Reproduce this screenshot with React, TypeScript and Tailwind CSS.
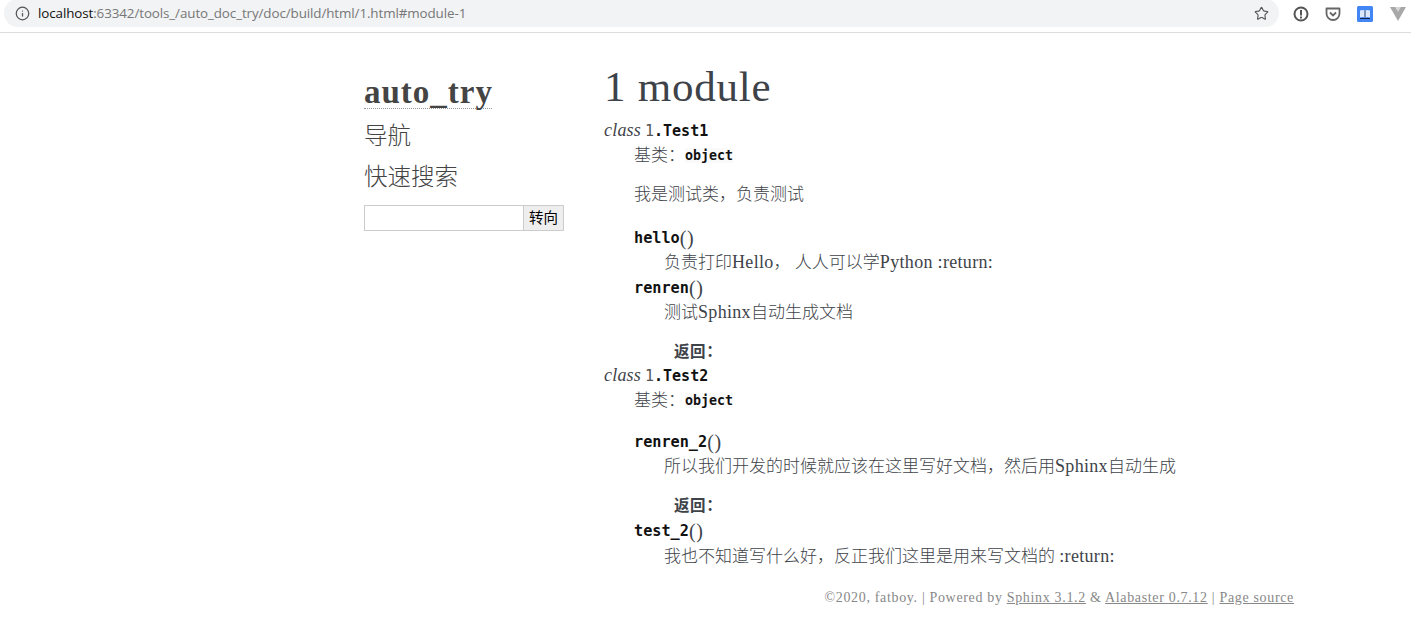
import React from "react";
import { Info, Star } from "lucide-react";

const serif = "font-['Liberation_Serif','Noto_Sans_CJK_SC',serif]";
const mono = "font-['DejaVu_Sans_Mono',monospace] font-bold text-[#111]";

function Name({ children }: { children: React.ReactNode }) {
  return <span className={`${mono} text-[15.2px]`}>{children}</span>;
}

function Obj() {
  return <span className={`${mono} text-[13.3px] bg-[#fafafa] relative -top-px`}>object</span>;
}

function L({ children }: { children: React.ReactNode }) {
  return <span className="text-[18px] tracking-[0.32px] font-normal">{children}</span>;
}

function Row({ indent = "", className = "", children }: { indent?: string; className?: string; children: React.ReactNode }) {
  return <div className={`h-[25px] leading-[25px] whitespace-nowrap ${indent} ${className}`}>{children}</div>;
}

function ClassSig({ name }: { name: string }) {
  return (
    <Row>
      <em className="text-[18px] tracking-[0.2px]">class</em>
      <span className="font-['DejaVu_Sans_Mono',monospace] text-[15px] ml-[4px] text-[#555]">1</span>
      <span className={`${mono} text-[15px]`}>.{name}</span>
    </Row>
  );
}

function Method({ name }: { name: string }) {
  return (
    <div className="h-[25px] pl-[30px] flex items-center whitespace-nowrap translate-y-px">
      <Name>{name}</Name>
      <span className="text-[20px] leading-none tracking-[0.6px] -translate-y-px">()</span>
    </div>
  );
}

function Bases() {
  return (
    <Row indent="pl-[30px]">
      <span className="font-light">基类：</span>
      <Obj />
    </Row>
  );
}

function Returns() {
  return <Row indent="pl-[70px]" className="font-bold text-[15.5px] tracking-[0.6px]">返回：</Row>;
}

function Toolbar() {
  return (
    <div className="h-[33px] border-b border-[#dcdcdc] flex items-start bg-white">
      <div className="ml-[4px] w-[1275px] h-[28px] bg-[#f1f3f4] rounded-r-[14px] rounded-l-[14px] flex items-center pl-[11px] pr-[10px] -mt-px">
        <Info size={15} strokeWidth={2} className="text-[#555]" />
        <span className="ml-[8px] text-[13.4px] font-['Open_Sans',sans-serif] text-[#777] tracking-[-0.1px]">
          <span className="text-[#111]">localhost</span>:63342/tools_/auto_doc_try/doc/build/html/1.html#module-1
        </span>
        <Star size={15} strokeWidth={1.8} className="ml-auto text-[#555]" />
      </div>
      <div className="flex items-center h-[28px] ml-[14px] gap-[16px]">
        <svg width="16" height="16" viewBox="0 0 16 16">
          <circle cx="8" cy="8" r="6.5" fill="none" stroke="#555" strokeWidth="2" />
          <rect x="7" y="4" width="2" height="5.5" fill="#555" />
          <rect x="7" y="10.5" width="2" height="2" fill="#555" />
        </svg>
        <svg width="16" height="16" viewBox="0 0 16 16">
          <path d="M1.5 2.5h13v5a6.5 6.5 0 0 1-13 0z" fill="none" stroke="#666" strokeWidth="1.8" strokeLinejoin="round" />
          <path d="M5 6.5l3 3 3-3" fill="none" stroke="#666" strokeWidth="1.8" />
        </svg>
        <svg width="16" height="16" viewBox="0 0 16 16">
          <rect width="16" height="16" rx="1.5" fill="#4285f4" />
          <path d="M3 4.5q2.5-1 5 0q2.500-1 5 0v7q-2.500-1-5 0q-2.500-1-5 0z" fill="#dbe7fb" />
          <path d="M8 4.500v7" stroke="#1a3a70" strokeWidth="1" />
          <path d="M3 12.500h10" stroke="#12284e" strokeWidth="1" />
        </svg>
        <svg width="16" height="16" viewBox="0 0 16 16" className="ml-[1px]">
          <path d="M0 1h16l-8 14z" fill="#a8a8a8" />
          <path d="M5 1h6l-3 5z" fill="#d6d6d6" />
        </svg>
      </div>
    </div>
  );
}

export default function App() {
  return (
    <div className={`w-[1411px] h-[618px] bg-white overflow-hidden text-[17px] text-[#3e4349] ${serif}`}>
      <Toolbar />
      <div className="flex pl-[364px]">
        <aside className="w-[240px] shrink-0 text-[#444] pt-[38px]">
          <div className="w-[128px] h-[38px] border-b border-dotted border-[#999] font-bold text-[33px] leading-[42px] whitespace-nowrap tracking-[1px]">
            auto_try
          </div>
          <div className="mt-[9px] h-[36px] leading-[36px] text-[23.5px] font-light">导航</div>
          <div className="mt-[5px] h-[36px] leading-[36px] text-[23.5px] font-light">快速搜索</div>
          <div className="mt-[10px] flex w-[200px] h-[26px]">
            <input className="w-[160px] h-full border border-[#ccc] outline-none bg-white" />
            <button className="w-[40px] h-full border border-l-0 border-[#ccc] bg-[#eee] text-[14.5px] text-black leading-none">
              转向
            </button>
          </div>
        </aside>
        <main className="pt-[27px]">
          <h1 className="text-[43px] leading-[54px] h-[58px] tracking-[0.75px] whitespace-nowrap">1 module</h1>
          <ClassSig name="Test1" />
          <Bases />
          <Row indent="pl-[30px] mt-[14px]" className="font-light">我是测试类，负责测试</Row>
          <div className="mt-[18px]" />
          <Method name="hello" />
          <Row indent="pl-[60px]"><span className="font-light">负责打印</span><L>Hello</L><span className="font-light">， 人人可以学</span><L>Python :return:</L></Row>
          <Method name="renren" />
          <Row indent="pl-[60px]"><span className="font-light">测试</span><L>Sphinx</L><span className="font-light">自动生成文档</span></Row>
          <div className="mt-[14px]" />
          <Returns />
          <div className="-mt-px" />
          <ClassSig name="Test2" />
          <Bases />
          <div className="mt-[16px]" />
          <Method name="renren_2" />
          <Row indent="pl-[60px]"><span className="font-light">所以我们开发的时候就应该在这里写好文档，然后用</span><L>Sphinx</L><span className="font-light">自动生成</span></Row>
          <div className="mt-[14px]" />
          <Returns />
          <Method name="test_2" />
          <div className="mt-px" />
          <Row indent="pl-[60px]"><span className="font-light">我也不知道写什么好，反正我们这里是用来写文档的 </span><L>:return:</L></Row>
        </main>
      </div>
      <footer className="mt-[19px] pr-[117px] text-right text-[14px] leading-[20px] text-[#888] tracking-[0.66px] whitespace-nowrap">
        ©2020, fatboy. | Powered by <span className="underline">Sphinx 3.1.2</span> &amp; <span className="underline">Alabaster 0.7.12</span> | <span className="underline">Page source</span>
      </footer>
    </div>
  );
}
